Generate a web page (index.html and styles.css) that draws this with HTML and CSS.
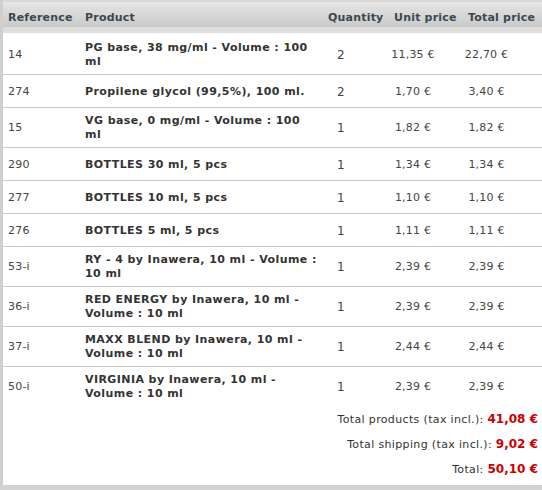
FILE: index.html
```html
<!DOCTYPE html>
<html>
<head>
<meta charset="utf-8">
<link rel="stylesheet" href="styles.css">
</head>
<body>
<div class="frame">
<table class="order">
  <colgroup>
    <col class="c-ref"><col class="c-prod"><col class="c-qty"><col class="c-unit"><col class="c-total">
  </colgroup>
  <thead>
    <tr>
      <th>Reference</th><th>Product</th><th>Quantity</th><th>Unit price</th><th>Total price</th>
    </tr>
  </thead>
  <tbody>
    <tr><td>14</td><td class="prod">PG base, 38 mg/ml - Volume : 100 ml</td><td class="qty">2</td><td class="unit">11,35 €</td><td class="tot">22,70 €</td></tr>
    <tr><td>274</td><td class="prod">Propilene glycol (99,5%), 100 ml.</td><td class="qty">2</td><td class="unit">1,70 €</td><td class="tot">3,40 €</td></tr>
    <tr><td>15</td><td class="prod">VG base, 0 mg/ml - Volume : 100 ml</td><td class="qty">1</td><td class="unit">1,82 €</td><td class="tot">1,82 €</td></tr>
    <tr><td>290</td><td class="prod">BOTTLES 30 ml, 5 pcs</td><td class="qty">1</td><td class="unit">1,34 €</td><td class="tot">1,34 €</td></tr>
    <tr><td>277</td><td class="prod">BOTTLES 10 ml, 5 pcs</td><td class="qty">1</td><td class="unit">1,10 €</td><td class="tot">1,10 €</td></tr>
    <tr><td>276</td><td class="prod">BOTTLES 5 ml, 5 pcs</td><td class="qty">1</td><td class="unit">1,11 €</td><td class="tot">1,11 €</td></tr>
    <tr><td>53-i</td><td class="prod">RY - 4 by Inawera, 10 ml - Volume : 10 ml</td><td class="qty">1</td><td class="unit">2,39 €</td><td class="tot">2,39 €</td></tr>
    <tr><td>36-i</td><td class="prod">RED ENERGY by Inawera, 10 ml - Volume : 10 ml</td><td class="qty">1</td><td class="unit">2,39 €</td><td class="tot">2,39 €</td></tr>
    <tr><td>37-i</td><td class="prod">MAXX BLEND by Inawera, 10 ml - Volume : 10 ml</td><td class="qty">1</td><td class="unit">2,44 €</td><td class="tot">2,44 €</td></tr>
    <tr class="last"><td>50-i</td><td class="prod">VIRGINIA by Inawera, 10 ml - Volume : 10 ml</td><td class="qty">1</td><td class="unit">2,39 €</td><td class="tot">2,39 €</td></tr>
  </tbody>
  <tfoot>
    <tr><td colspan="5">Total products (tax incl.): <span class="price">41,08 €</span></td></tr>
    <tr><td colspan="5">Total shipping (tax incl.): <span class="price">9,02 €</span></td></tr>
    <tr><td colspan="5">Total: <span class="price">50,10 €</span></td></tr>
  </tfoot>
</table>
</div>
</body>
</html>
```
FILE: styles.css
```css
html, body {
  margin: 0;
  padding: 0;
  background: #ffffff;
}
body {
  font-family: "DejaVu Sans", Verdana, sans-serif;
  font-size: 11px;
  color: #333333;
  overflow: hidden;
}
.frame {
  width: 560px;
  border-left: 3px solid #cfcfcf;
  border-bottom: 5px solid #d2d2d2;
  padding-bottom: 4px;
  background: #fff;
}
.order {
  width: 539px;
  table-layout: fixed;
  border-collapse: collapse;
}
.c-ref { width: 77px; }
.c-prod { width: 243px; }
.c-qty { width: 66px; }
.c-unit { width: 74px; }
.c-total { width: 79px; }

.order th {
  height: 19px;
  padding: 7px 0 0 5px;
  text-align: left;
  font-weight: bold;
  color: #3a4852;
  white-space: nowrap;
  letter-spacing: 0.2px;
  background: linear-gradient(#e6e6e6, #d6d6d6 55%, #c8c8c8);
  border-top: 1px solid #d8d8d8;
  border-bottom: 6px solid #dedede;
}
.order tbody td {
  height: 21px;
  padding: 6px 5px 5px 5px;
  line-height: 14px;
  vertical-align: middle;
  border-bottom: 1px solid #c8c8c8;
  color: #444;
  letter-spacing: 0.2px;
}
.order tbody tr:first-child td {
  padding-top: 8px;
}
.order tbody tr.last td {
  border-bottom: none;
}
.order td.prod {
  font-weight: bold;
  color: #333;
  letter-spacing: 0.42px;
  padding-right: 5px;
}
.order td.qty {
  padding-left: 14px;
  font-size: 12px;
}
.order td.unit {
  text-align: center;
  white-space: nowrap;
  padding-left: 0;
  padding-right: 26px;
}
.order td.tot {
  text-align: center;
  white-space: nowrap;
  padding-left: 0;
  padding-right: 32px;
}
.order tfoot td {
  height: 25px;
  padding: 0 4px 0 0;
  text-align: right;
  vertical-align: middle;
  color: #333;
  letter-spacing: 0.35px;
}
.price {
  font-size: 12px;
  font-weight: bold;
  color: #cc0000;
  letter-spacing: 0;
}
```
